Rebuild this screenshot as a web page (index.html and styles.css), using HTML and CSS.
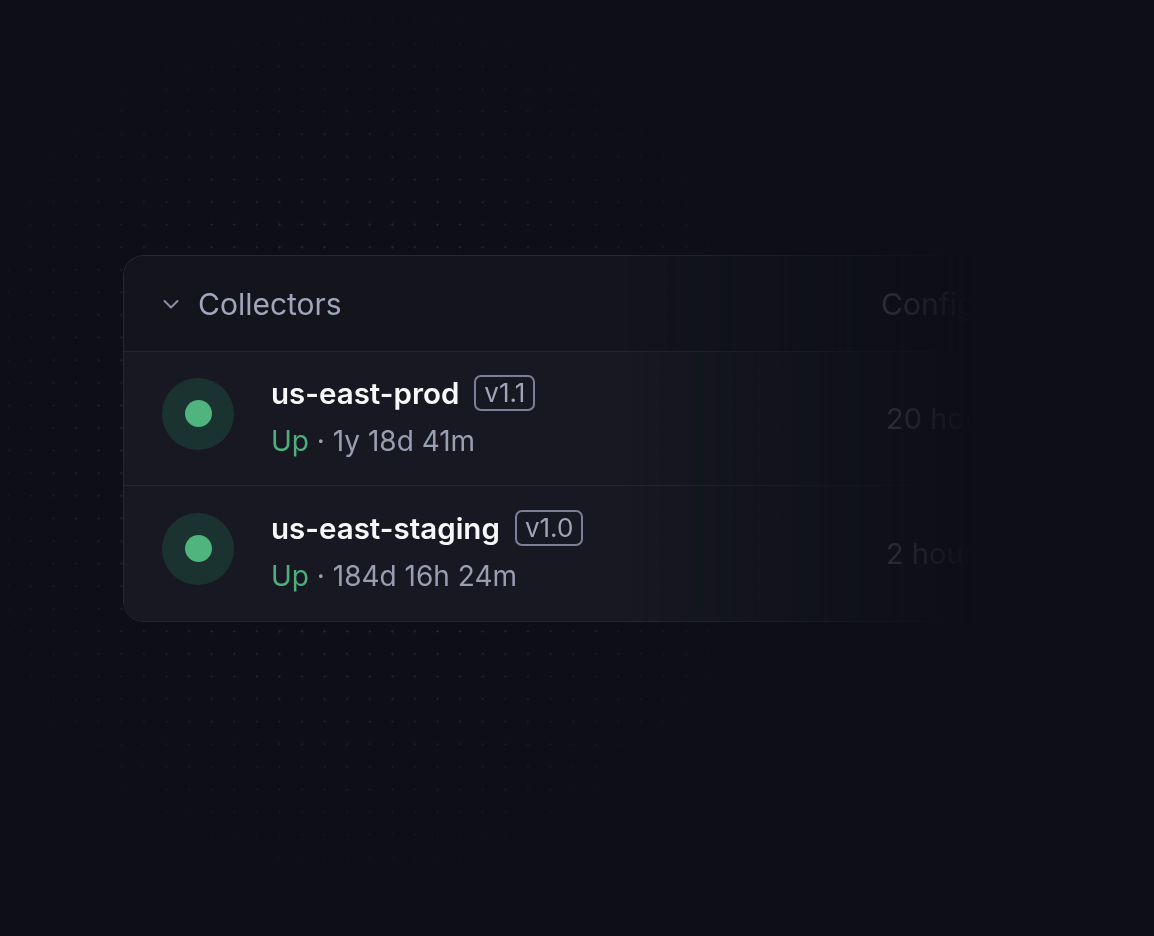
FILE: index.html
```html
<!DOCTYPE html>
<html>
<head>
  <meta charset="utf-8">
  <title>Collectors</title>
  <link rel="stylesheet" href="styles.css">
</head>
<body>
  <div class="stage">
    <div class="card">
      <div class="card-head">
        <div class="head-title">
          <svg class="chevron" width="18" height="18" viewBox="0 0 18 18" fill="none">
            <path d="M2.5 6l6.5 6.5L15.5 6" stroke="currentColor" stroke-width="2" stroke-linecap="round" stroke-linejoin="round"/>
          </svg>
          <span>Collectors</span>
        </div>
        <div class="col-config">Config</div>
      </div>

      <div class="row">
        <div class="collector">
          <div class="status"><span class="status-dot"></span></div>
          <div class="info">
            <div class="name-line">
              <span class="name">us-east-prod</span>
              <span class="version">v1.1</span>
            </div>
            <div class="uptime"><span class="up">Up</span> · 1y 18d 41m</div>
          </div>
        </div>
        <div class="col-config">20 hours ago</div>
      </div>

      <div class="row">
        <div class="collector">
          <div class="status"><span class="status-dot"></span></div>
          <div class="info">
            <div class="name-line">
              <span class="name">us-east-staging</span>
              <span class="version">v1.0</span>
            </div>
            <div class="uptime"><span class="up">Up</span> · 184d 16h 24m</div>
          </div>
        </div>
        <div class="col-config">2 hours ago</div>
      </div>
    </div>
  </div>
</body>
</html>
```

FILE: styles.css
```css
html, body {
  margin: 0;
  height: 100%;
}

body {
  background: #0d0e16;
  font-family: Inter, "Noto Sans", sans-serif;
  color: #f4f4f7;
  overflow: hidden;
}

/* faint dotted canvas behind the card */
body::before {
  content: "";
  position: fixed;
  inset: 0;
  background-image: radial-gradient(circle, #282a36 0.9px, transparent 1.3px);
  background-size: 22.6px 22.6px;
  background-position: -3px 10px;
  -webkit-mask-image: radial-gradient(ellipse 460px 480px at 360px 440px, #000 40%, transparent 100%);
  mask-image: radial-gradient(ellipse 460px 480px at 360px 440px, #000 40%, transparent 100%);
  pointer-events: none;
}

.stage {
  position: relative;
  padding: 255px 0 0 123px;
}

.card {
  width: 1000px;
  background: #13141c;
  border: 1px solid #262833;
  border-radius: 20px;
  overflow: hidden;
  -webkit-mask-image: linear-gradient(to right, #000 0, #000 500px, transparent 850px);
  mask-image: linear-gradient(to right, #000 0, #000 500px, transparent 850px);
}

.card-head,
.row {
  display: grid;
  grid-template-columns: 719px 1fr;
  align-items: center;
  padding: 0 38px;
}

.card-head {
  height: 95px;
}

.head-title {
  display: flex;
  align-items: center;
  gap: 18px;
  font-size: 30px;
  color: #a2a6bc;
}

.chevron {
  color: #8a8ea3;
  margin-top: 1px;
}

.row {
  height: 133px;
  background: #171821;
  border-top: 1px solid #23252f;
}

.row:last-child {
  height: 135px;
}

.collector {
  display: flex;
  align-items: center;
  gap: 37px;
}

.status {
  width: 72px;
  height: 72px;
  margin-top: -10px;
  border-radius: 50%;
  background: #1b3330;
  display: flex;
  align-items: center;
  justify-content: center;
  flex-shrink: 0;
}

.status-dot {
  width: 27px;
  height: 27px;
  border-radius: 50%;
  background: #50b47f;
}

.info {
  display: flex;
  flex-direction: column;
  gap: 14px;
  margin-top: -6px;
}

.name-line {
  display: flex;
  align-items: center;
  gap: 15px;
  height: 36px;
}

.name {
  font-size: 29.5px;
  font-weight: 600;
  color: #f7f7fa;
}

.version {
  box-sizing: border-box;
  height: 36px;
  padding: 0 8px;
  border: 2px solid #7c8096;
  border-radius: 7px;
  display: flex;
  align-items: center;
  font-size: 26px;
  color: #a0a4b8;
}

.uptime {
  font-size: 28px;
  line-height: 32px;
  color: #9a9eb3;
}

.up {
  color: #4daf7d;
}

.col-config {
  font-size: 30px;
  color: #868a9e;
  white-space: nowrap;
}

.row .col-config {
  padding-left: 5px;
  font-size: 29px;
}
```
